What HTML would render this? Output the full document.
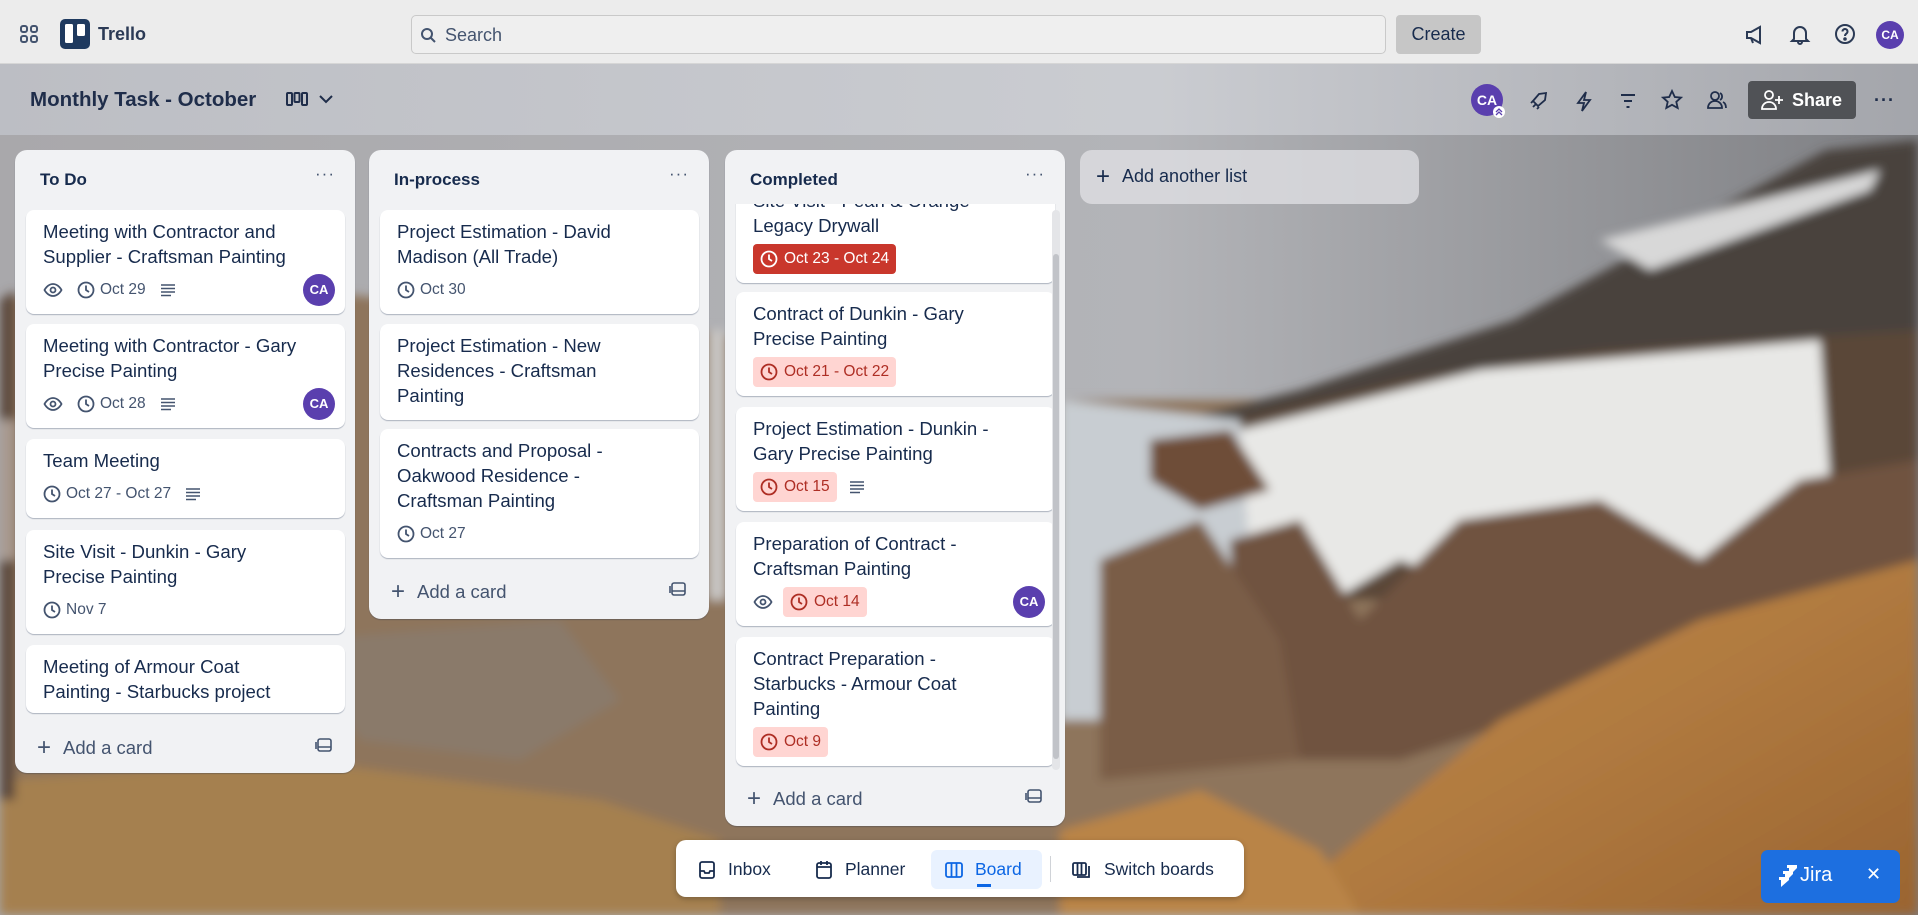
<!DOCTYPE html>
<html><head><meta charset="utf-8">
<style>
*{box-sizing:border-box;margin:0;padding:0}
body{width:1918px;height:915px;overflow:hidden;position:relative;font-family:"Liberation Sans",Arial,sans-serif;color:#172b4d;background:#8a6a4a}
#bg{position:absolute;left:0;top:0;width:1918px;height:915px}
.top{position:absolute;left:0;top:0;width:1918px;height:64px;background:#ececec;border-bottom:1px solid #d6d6d6}
.hdr{position:absolute;left:0;top:64px;width:1918px;height:71px;background:linear-gradient(90deg,rgba(190,192,198,.92),rgba(205,207,212,.9) 60%,rgba(170,172,178,.85));}
.abs{position:absolute}
.search{left:411px;top:15px;width:975px;height:39px;border:1px solid #c9c9c9;border-radius:5px;background:#efefef;font-size:18px;color:#44546f;padding:9px 0 0 33px}
.create{left:1396px;top:15px;width:85px;height:39px;background:#c6c6c6;border-radius:4px;font-size:18px;color:#172b4d;text-align:center;line-height:39px}
.av{border-radius:50%;background:#5a3fae;color:#fff;font-size:13px;text-align:center;font-weight:bold}
.list{position:absolute;background:#f1f2f4;border-radius:12px;box-shadow:0 1px 1px rgba(9,30,66,.25);width:340px}
.lh{position:absolute;left:25px;top:20px;font-size:17px;font-weight:bold;color:#172b4d}
.ld{position:absolute;right:20px;top:14px;font-size:17px;color:#44546f;letter-spacing:1px}
.card{position:absolute;left:11px;width:319px;background:#fff;border-radius:8px;box-shadow:0 1px 1px rgba(9,30,66,.3);padding:9px 16px 9px 17px}
.t{font-size:18.6px;line-height:25px;color:#172b4d;white-space:nowrap}
.b{display:flex;align-items:center;height:30px;margin-top:6px;font-size:15.5px;color:#44546f;position:relative}
.b svg{flex:none}
.bd{display:flex;align-items:center;gap:5px;margin-right:14px}
.pill{display:flex;align-items:center;gap:6px;height:30px;padding:0 7px;border-radius:4px;margin-right:12px}
.red{background:#c9372c;color:#fff}
.lr{background:#ffd5d2;color:#ae2e24}
.cav{position:absolute;right:-6px;top:-1px;width:32px;height:32px;line-height:32px}
.add{position:absolute;left:22px;font-size:18.5px;color:#44546f;display:flex;align-items:center;gap:12px}
.tpl{position:absolute;right:22px}
</style></head><body>
<svg id="bg" viewBox="0 0 1918 915" preserveAspectRatio="none">
<defs>
<linearGradient id="sky" x1="0" y1="0" x2="1" y2="0"><stop offset="0" stop-color="#a9a8ab"/><stop offset=".6" stop-color="#b3b4b8"/><stop offset="1" stop-color="#7d7e82"/></linearGradient>
<linearGradient id="or" x1="0" y1="0" x2="1" y2="1"><stop offset="0" stop-color="#c08a4a"/><stop offset=".5" stop-color="#b07a40"/><stop offset="1" stop-color="#9a6430"/></linearGradient>
<filter id="bl"><feGaussianBlur stdDeviation="5"/></filter>
</defs>
<rect width="1918" height="915" fill="url(#sky)"/>
<g filter="url(#bl)">
<polygon points="0,300 200,280 400,300 700,330 1060,400 1918,400 1918,915 0,915" fill="#8e755c"/>
<polygon points="1100,440 1300,390 1514,320 1826,150 1918,140 1918,600 1100,600" fill="#4a423e"/>
<polygon points="1190,430 1400,380 1600,350 1918,330 1918,600 1200,600" fill="#5a4639"/>
<polygon points="1060,400 1240,430 1480,370 1820,340 1830,480 1760,560 1500,600 1400,560 1300,620 1240,720 1060,720" fill="#e8e8e6"/>
<polygon points="1600,240 1880,170 1870,190 1650,270" fill="#d8d8d8"/>
<polygon points="1060,400 1240,420 1250,560 1150,720 1060,720" fill="#c8cdd2"/>
<polygon points="1150,440 1230,430 1270,490 1200,510 1150,480" fill="#6e4e38"/>
<polygon points="1230,540 1300,520 1360,620 1460,520 1600,500 1700,560 1800,480 1918,460 1918,620 1700,660 1400,760 1240,760" fill="#6f5240"/>
<polygon points="1100,560 1200,520 1280,640 1300,760 1100,780" fill="#7a5d46"/>
<polygon points="1320,870 1500,720 1700,620 1918,560 1918,915 1300,915" fill="url(#or)"/>
<polygon points="1060,830 1200,790 1320,850 1360,915 1060,915" fill="#b98446"/>
<polygon points="0,780 300,760 600,800 720,840 720,915 0,915" fill="#a5804f"/>
<polygon points="300,640 560,620 620,700 520,760 360,740" fill="#8a7a6a"/>
<polygon points="709,330 725,330 725,600 709,600" fill="#c9c7c5"/>
<polygon points="0,300 15,290 15,800 0,800" fill="#5c4a3c"/>
<polygon points="0,420 15,420 15,560 0,560" fill="#a89a90"/>
</g>
</svg>

<div class="top"></div>
<svg class="abs" style="left:19px;top:24px" width="20" height="20" viewBox="0 0 20 20" fill="none" stroke="#44546f" stroke-width="2"><rect x="2" y="2" width="6" height="6" rx="2"/><rect x="12" y="2" width="6" height="6" rx="2"/><rect x="2" y="12" width="6" height="6" rx="2"/><rect x="12" y="12" width="6" height="6" rx="2"/></svg>
<svg class="abs" style="left:60px;top:19px" width="30" height="30" viewBox="0 0 30 30"><rect width="30" height="30" rx="5" fill="#1f3a5f"/><rect x="5" y="5" width="8" height="19" rx="1.5" fill="#fff"/><rect x="17" y="5" width="8" height="12" rx="1.5" fill="#fff"/></svg>
<div class="abs" style="left:98px;top:24px;font-size:18px;font-weight:bold;color:#2b3a55">Trello</div>
<div class="abs search">Search</div>
<svg class="abs" style="left:420px;top:27px" width="16" height="16" viewBox="0 0 16 16" fill="none" stroke="#44546f" stroke-width="2"><circle cx="7" cy="7" r="5"/><path d="M11 11l4 4"/></svg>
<div class="abs create">Create</div>
<svg class="abs" style="left:1744px;top:24px" width="22" height="22" viewBox="0 0 22 22" fill="none" stroke="#2b3a55" stroke-width="2"><path d="M3 8v6h4l9 5V3L7 8z"/><path d="M7 14l2 5"/></svg>
<svg class="abs" style="left:1789px;top:23px" width="22" height="22" viewBox="0 0 22 22" fill="none" stroke="#2b3a55" stroke-width="2"><path d="M5 16V10a6 6 0 0112 0v6l2 2H3z"/><path d="M9 19a2 2 0 004 0"/></svg>
<svg class="abs" style="left:1834px;top:23px" width="22" height="22" viewBox="0 0 22 22" fill="none" stroke="#2b3a55" stroke-width="2"><circle cx="11" cy="11" r="9"/><path d="M8.5 8.5a2.5 2.5 0 114 2c-1 .7-1.5 1.2-1.5 2.5"/><circle cx="11" cy="16" r=".8" fill="#2b3a55"/></svg>
<div class="abs av" style="left:1876px;top:21px;width:28px;height:28px;line-height:28px;font-size:12px">CA</div>

<div class="hdr"></div>
<div class="abs" style="left:30px;top:88px;font-size:20.5px;font-weight:bold;color:#1f2d4a">Monthly Task - October</div>
<svg class="abs" style="left:286px;top:90px" width="22" height="18" viewBox="0 0 22 18" fill="none" stroke="#1f2d4a" stroke-width="2"><rect x="1" y="3" width="5" height="12" rx="1"/><rect x="8.5" y="3" width="5" height="9" rx="1"/><rect x="16" y="3" width="5" height="12" rx="1"/></svg>
<svg class="abs" style="left:318px;top:93px" width="16" height="12" viewBox="0 0 16 12" fill="none" stroke="#1f2d4a" stroke-width="2"><path d="M2 3l6 6 6-6"/></svg>
<div class="abs av" style="left:1471px;top:84px;width:32px;height:32px;line-height:32px;font-size:14px">CA</div>
<svg class="abs" style="left:1493px;top:106px" width="12" height="12" viewBox="0 0 12 12"><circle cx="6" cy="6" r="6" fill="#fff"/><path d="M3 6l3-3 3 3M3 9l3-3 3 3" stroke="#5a3fae" fill="none" stroke-width="1.3"/></svg>
<svg class="abs" style="left:1528px;top:90px" width="22" height="22" viewBox="0 0 22 22" fill="none" stroke="#1f2d4a" stroke-width="1.8"><path d="M8 14l-3-3 6-7 7-1-1 7-7 6z"/><path d="M5 17l3-3M3 13l2-2M9 19l2-2"/></svg>
<svg class="abs" style="left:1574px;top:90px" width="20" height="22" viewBox="0 0 20 22" fill="none" stroke="#1f2d4a" stroke-width="1.8"><path d="M12 2L4 13h6l-2 8 8-11h-6z"/></svg>
<svg class="abs" style="left:1618px;top:91px" width="20" height="20" viewBox="0 0 20 20" fill="none" stroke="#1f2d4a" stroke-width="2"><path d="M3 4h14M6 10h8M8.5 16h3"/></svg>
<svg class="abs" style="left:1661px;top:89px" width="22" height="22" viewBox="0 0 22 22" fill="none" stroke="#1f2d4a" stroke-width="1.8"><path d="M11 2l2.8 6 6.2.6-4.7 4.2 1.4 6.2L11 15.8 5.3 19l1.4-6.2L2 8.6 8.2 8z"/></svg>
<svg class="abs" style="left:1706px;top:89px" width="22" height="22" viewBox="0 0 22 22" fill="none" stroke="#1f2d4a" stroke-width="1.8"><circle cx="9" cy="7" r="4"/><path d="M2 19c0-4 3-7 7-7s7 3 7 7z"/><path d="M14 4a4 4 0 010 7M17 13c2 1 3 3 3 6"/></svg>
<div class="abs" style="left:1748px;top:81px;width:108px;height:38px;background:#505256;border-radius:4px;color:#fff;font-size:18px;font-weight:bold;line-height:38px;padding-left:44px">Share</div>
<svg class="abs" style="left:1760px;top:89px" width="24" height="22" viewBox="0 0 24 22" fill="none" stroke="#fff" stroke-width="1.8"><circle cx="9" cy="6" r="4"/><path d="M2 20c0-4 3-7 7-7s7 3 7 7z"/><path d="M19 7v8M15 11h8"/></svg>
<div class="abs" style="left:1874px;top:90px;font-size:18px;color:#1f2d4a;letter-spacing:1px;font-weight:bold">···</div>

<!-- To Do -->
<div class="list" style="left:15px;top:150px;height:623px">
<div class="lh">To Do</div><div class="ld">···</div>
<div class="card" style="top:60px"><div class="t">Meeting with Contractor and<br>Supplier - Craftsman Painting</div>
<div class="b"><span class="bd"><svg width="20" height="20" viewBox="0 0 20 20" fill="none" stroke="#44546f" stroke-width="1.8"><path d="M1.5 10s3-6 8.5-6 8.5 6 8.5 6-3 6-8.5 6-8.5-6-8.5-6z"/><circle cx="10" cy="10" r="2.5"/></svg></span><span class="bd"><svg width="18" height="18" viewBox="0 0 18 18" fill="none" stroke="#44546f" stroke-width="1.8"><circle cx="9" cy="9" r="7.5"/><path d="M9 4.5V9l3 2"/></svg>Oct 29</span><span class="bd"><svg width="16" height="16" viewBox="0 0 16 16" stroke="#44546f" stroke-width="1.6"><path d="M1 3h14M1 6.5h14M1 10h14M1 13.5h10"/></svg></span><div class="av cav">CA</div></div></div>
<div class="card" style="top:174px"><div class="t">Meeting with Contractor - Gary<br>Precise Painting</div>
<div class="b"><span class="bd"><svg width="20" height="20" viewBox="0 0 20 20" fill="none" stroke="#44546f" stroke-width="1.8"><path d="M1.5 10s3-6 8.5-6 8.5 6 8.5 6-3 6-8.5 6-8.5-6-8.5-6z"/><circle cx="10" cy="10" r="2.5"/></svg></span><span class="bd"><svg width="18" height="18" viewBox="0 0 18 18" fill="none" stroke="#44546f" stroke-width="1.8"><circle cx="9" cy="9" r="7.5"/><path d="M9 4.5V9l3 2"/></svg>Oct 28</span><span class="bd"><svg width="16" height="16" viewBox="0 0 16 16" stroke="#44546f" stroke-width="1.6"><path d="M1 3h14M1 6.5h14M1 10h14M1 13.5h10"/></svg></span><div class="av cav">CA</div></div></div>
<div class="card" style="top:289px"><div class="t">Team Meeting</div>
<div class="b"><span class="bd"><svg width="18" height="18" viewBox="0 0 18 18" fill="none" stroke="#44546f" stroke-width="1.8"><circle cx="9" cy="9" r="7.5"/><path d="M9 4.5V9l3 2"/></svg>Oct 27 - Oct 27</span><span class="bd"><svg width="16" height="16" viewBox="0 0 16 16" stroke="#44546f" stroke-width="1.6"><path d="M1 3h14M1 6.5h14M1 10h14M1 13.5h10"/></svg></span></div></div>
<div class="card" style="top:380px"><div class="t">Site Visit - Dunkin - Gary<br>Precise Painting</div>
<div class="b"><span class="bd"><svg width="18" height="18" viewBox="0 0 18 18" fill="none" stroke="#44546f" stroke-width="1.8"><circle cx="9" cy="9" r="7.5"/><path d="M9 4.5V9l3 2"/></svg>Nov 7</span></div></div>
<div class="card" style="top:495px"><div class="t">Meeting of Armour Coat<br>Painting - Starbucks project</div></div>
<div class="add" style="top:584px"><span style="font-size:24px;font-weight:300">+</span>Add a card</div>
<svg class="tpl" style="top:586px" width="18" height="18" viewBox="0 0 18 18" fill="none" stroke="#44546f" stroke-width="1.6"><rect x="3" y="3" width="13" height="12" rx="2"/><path d="M1 6v7M3 11h13"/></svg>
</div>

<!-- In-process -->
<div class="list" style="left:369px;top:150px;height:469px">
<div class="lh">In-process</div><div class="ld">···</div>
<div class="card" style="top:60px"><div class="t">Project Estimation - David<br>Madison (All Trade)</div>
<div class="b"><span class="bd"><svg width="18" height="18" viewBox="0 0 18 18" fill="none" stroke="#44546f" stroke-width="1.8"><circle cx="9" cy="9" r="7.5"/><path d="M9 4.5V9l3 2"/></svg>Oct 30</span></div></div>
<div class="card" style="top:174px;padding-bottom:12px"><div class="t">Project Estimation - New<br>Residences - Craftsman<br>Painting</div></div>
<div class="card" style="top:279px"><div class="t">Contracts and Proposal -<br>Oakwood Residence -<br>Craftsman Painting</div>
<div class="b"><span class="bd"><svg width="18" height="18" viewBox="0 0 18 18" fill="none" stroke="#44546f" stroke-width="1.8"><circle cx="9" cy="9" r="7.5"/><path d="M9 4.5V9l3 2"/></svg>Oct 27</span></div></div>
<div class="add" style="top:428px"><span style="font-size:24px;font-weight:300">+</span>Add a card</div>
<svg class="tpl" style="top:430px" width="18" height="18" viewBox="0 0 18 18" fill="none" stroke="#44546f" stroke-width="1.6"><rect x="3" y="3" width="13" height="12" rx="2"/><path d="M1 6v7M3 11h13"/></svg>
</div>

<!-- Completed -->
<div class="list" style="left:725px;top:150px;height:676px">
<div class="lh">Completed</div><div class="ld">···</div>
<div style="position:absolute;left:0;top:54px;width:340px;height:574px;overflow:hidden">
<div class="card" style="top:-25px"><div class="t">Site Visit - Pearl &amp; Orange<br>Legacy Drywall</div>
<div class="b"><span class="pill red"><svg width="18" height="18" viewBox="0 0 18 18" fill="none" stroke="#fff" stroke-width="1.8"><circle cx="9" cy="9" r="7.5"/><path d="M9 4.5V9l3 2"/></svg>Oct 23 - Oct 24</span></div></div>
<div class="card" style="top:88px"><div class="t">Contract of Dunkin - Gary<br>Precise Painting</div>
<div class="b"><span class="pill lr"><svg width="18" height="18" viewBox="0 0 18 18" fill="none" stroke="#ae2e24" stroke-width="1.8"><circle cx="9" cy="9" r="7.5"/><path d="M9 4.5V9l3 2"/></svg>Oct 21 - Oct 22</span></div></div>
<div class="card" style="top:203px"><div class="t">Project Estimation - Dunkin -<br>Gary Precise Painting</div>
<div class="b"><span class="pill lr"><svg width="18" height="18" viewBox="0 0 18 18" fill="none" stroke="#ae2e24" stroke-width="1.8"><circle cx="9" cy="9" r="7.5"/><path d="M9 4.5V9l3 2"/></svg>Oct 15</span><svg width="16" height="16" viewBox="0 0 16 16" stroke="#44546f" stroke-width="1.6"><path d="M1 3h14M1 6.5h14M1 10h14M1 13.5h10"/></svg></div></div>
<div class="card" style="top:318px"><div class="t">Preparation of Contract -<br>Craftsman Painting</div>
<div class="b"><span class="bd" style="margin-right:10px"><svg width="20" height="20" viewBox="0 0 20 20" fill="none" stroke="#44546f" stroke-width="1.8"><path d="M1.5 10s3-6 8.5-6 8.5 6 8.5 6-3 6-8.5 6-8.5-6-8.5-6z"/><circle cx="10" cy="10" r="2.5"/></svg></span><span class="pill lr"><svg width="18" height="18" viewBox="0 0 18 18" fill="none" stroke="#ae2e24" stroke-width="1.8"><circle cx="9" cy="9" r="7.5"/><path d="M9 4.5V9l3 2"/></svg>Oct 14</span><div class="av cav">CA</div></div></div>
<div class="card" style="top:433px"><div class="t">Contract Preparation -<br>Starbucks - Armour Coat<br>Painting</div>
<div class="b"><span class="pill lr"><svg width="18" height="18" viewBox="0 0 18 18" fill="none" stroke="#ae2e24" stroke-width="1.8"><circle cx="9" cy="9" r="7.5"/><path d="M9 4.5V9l3 2"/></svg>Oct 9</span></div></div>
<div style="position:absolute;left:327px;top:6px;width:8px;height:560px;background:#e4e5e8;border-radius:4px"></div>
<div style="position:absolute;left:328px;top:50px;width:6px;height:505px;background:#c1c3c8;border-radius:3px"></div>
</div>
<div class="add" style="top:635px"><span style="font-size:24px;font-weight:300">+</span>Add a card</div>
<svg class="tpl" style="top:637px" width="18" height="18" viewBox="0 0 18 18" fill="none" stroke="#44546f" stroke-width="1.6"><rect x="3" y="3" width="13" height="12" rx="2"/><path d="M1 6v7M3 11h13"/></svg>
</div>

<div class="abs" style="left:1080px;top:150px;width:339px;height:54px;background:rgba(225,226,230,.75);border-radius:12px"></div>
<div class="abs" style="left:1096px;top:166px;font-size:18px;color:#172b4d;display:flex;align-items:center;gap:12px"><span style="font-size:24px;line-height:18px">+</span>Add another list</div>

<!-- bottom nav -->
<div class="abs" style="left:676px;top:840px;width:568px;height:57px;background:#fff;border-radius:10px;box-shadow:0 2px 6px rgba(0,0,0,.25)"></div>
<div class="abs" style="left:931px;top:850px;width:111px;height:39px;background:#e9f2ff;border-radius:6px"></div>
<div class="abs" style="left:977px;top:884px;width:14px;height:3px;background:#0c66e4"></div>
<div class="abs" style="left:1050px;top:856px;width:1px;height:26px;background:#d0d3d8"></div>
<div class="abs" style="left:697px;top:859px;font-size:17.5px;color:#172b4d;display:flex;gap:11px;align-items:center"><svg width="20" height="20" viewBox="0 0 20 20" fill="none" stroke="#172b4d" stroke-width="1.8"><rect x="3" y="2" width="14" height="16" rx="2"/><path d="M3 11h4l1 2h4l1-2h4"/></svg>Inbox</div>
<div class="abs" style="left:814px;top:859px;font-size:17.5px;color:#172b4d;display:flex;gap:11px;align-items:center"><svg width="20" height="20" viewBox="0 0 20 20" fill="none" stroke="#172b4d" stroke-width="1.8"><rect x="3" y="3" width="14" height="15" rx="2"/><path d="M3 7h14M7 1v4M13 1v4"/></svg>Planner</div>
<div class="abs" style="left:944px;top:859px;font-size:17.5px;color:#0c66e4;display:flex;gap:11px;align-items:center"><svg width="20" height="20" viewBox="0 0 20 20" fill="none" stroke="#0c66e4" stroke-width="1.8"><rect x="2" y="3" width="16" height="14" rx="2"/><path d="M7.5 3v14M12.5 3v14"/></svg>Board</div>
<div class="abs" style="left:1071px;top:859px;font-size:17.5px;color:#172b4d;display:flex;gap:11px;align-items:center"><svg width="22" height="20" viewBox="0 0 22 20" fill="none" stroke="#172b4d" stroke-width="1.8"><rect x="2" y="3" width="13" height="12" rx="1.5"/><path d="M6.5 3v12M10.5 3v12M18 6v11H6"/></svg>Switch boards</div>

<div class="abs" style="left:1761px;top:850px;width:139px;height:53px;background:#1d6fe0;border-radius:7px"></div>
<svg class="abs" style="left:1779px;top:865px" width="18" height="22" viewBox="0 0 18 22" fill="#fff"><path d="M8 0h10v3l-8 8V3H8z"/><path d="M4 6h10v3l-8 8V9H4z"/><path d="M0 12h10v3l-8 7v-7H0z"/></svg>
<div class="abs" style="left:1800px;top:864px;font-size:20px;color:#fff">Jira</div>
<div class="abs" style="left:1866px;top:864px;font-size:18px;color:#fff">✕</div>
</body></html>
